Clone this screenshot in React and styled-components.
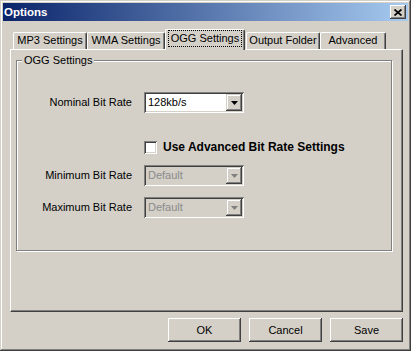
import React from "react";
import styled, { createGlobalStyle } from "styled-components";

const GlobalStyle = createGlobalStyle`
  html, body {
    margin: 0;
    padding: 0;
    background: #d4d0c8;
  }
  body {
    font-family: "Liberation Sans", Arial, sans-serif;
    font-size: 11px;
    color: #000;
  }
`;

const tabs = [
  { label: "MP3 Settings", width: 74 },
  { label: "WMA Settings", width: 78 },
  { label: "OGG Settings", width: 80, active: true },
  { label: "Output Folder", width: 74 },
  { label: "Advanced", width: 66 },
];

function DownArrow({ color }) {
  return (
    <svg width="7" height="4" viewBox="0 0 7 4">
      <polygon points="0,0 7,0 3.5,4" fill={color} />
    </svg>
  );
}

function ComboBox({ value, disabled }) {
  return (
    <Combo $disabled={disabled}>
      <ComboText $disabled={disabled}>{value}</ComboText>
      <DropButton>
        <DownArrow color={disabled ? "#808080" : "#000"} />
      </DropButton>
    </Combo>
  );
}

export default function App() {
  return (
    <>
      <GlobalStyle />
      <Window>
        <TitleBar>
          <Title>Options</Title>
          <CloseButton aria-label="Close">
            <svg width="8" height="7" viewBox="0 0 8 7">
              <path d="M0.5 0.5 L7.5 6.5 M7.5 0.5 L0.5 6.5" stroke="#000" strokeWidth="1.7" />
            </svg>
          </CloseButton>
        </TitleBar>
        <Body>
          <TabStrip>
            {tabs.map((t) => (
              <Tab key={t.label} $w={t.width} $active={t.active}>
                <TabLabel $focus={t.active}>{t.label}</TabLabel>
              </Tab>
            ))}
          </TabStrip>
          <Panel>
            <GroupBox>
              <Legend>OGG Settings</Legend>
              <FieldRow $top={25}>
                <Label>Nominal Bit Rate</Label>
                <ComboBox value="128kb/s" />
              </FieldRow>
              <FieldRow $top={28}>
                <Label />
                <CheckLine>
                  <CheckBox />
                  <CheckText>Use Advanced Bit Rate Settings</CheckText>
                </CheckLine>
              </FieldRow>
              <FieldRow $top={11}>
                <Label>Minimum Bit Rate</Label>
                <ComboBox value="Default" disabled />
              </FieldRow>
              <FieldRow $top={11}>
                <Label>Maximum Bit Rate</Label>
                <ComboBox value="Default" disabled />
              </FieldRow>
            </GroupBox>
          </Panel>
          <Footer>
            <Button>OK</Button>
            <Button>Cancel</Button>
            <Button>Save</Button>
          </Footer>
        </Body>
      </Window>
    </>
  );
}

// ---------- styles ----------
const Window = styled.div`
  box-sizing: border-box;
  width: 411px;
  height: 351px;
  padding: 3px;
  display: flex;
  flex-direction: column;
  background: #d4d0c8;
  box-shadow: inset -1px -1px #404040, inset 1px 1px #d4d0c8,
    inset -2px -2px #808080, inset 2px 2px #fff;
`;

const TitleBar = styled.div`
  height: 18px;
  display: flex;
  align-items: center;
  justify-content: space-between;
  padding: 0 2px 0 1px;
  background: linear-gradient(to right, #0a246a, #a6caf0);
`;

const Title = styled.span`
  color: #fff;
  font-weight: bold;
  font-size: 11.5px;
  line-height: 13px;
`;

const CloseButton = styled.button`
  width: 16px;
  height: 14px;
  padding: 0;
  border: 0;
  display: flex;
  align-items: center;
  justify-content: center;
  background: #d4d0c8;
  box-shadow: inset -1px -1px #404040, inset 1px 1px #fff,
    inset -2px -2px #808080, inset 2px 2px #d4d0c8;
`;

const Body = styled.div`
  flex: 1;
  display: flex;
  flex-direction: column;
  padding: 8px 5px 0 7px;
`;

const TabStrip = styled.div`
  position: relative;
  z-index: 1;
  height: 20px;
  display: flex;
  align-items: flex-end;
  padding-left: 3px;
`;

const Tab = styled.div`
  box-sizing: border-box;
  width: ${(p) => p.$w}px;
  height: ${(p) => (p.$active ? 21 : 17)}px;
  margin-bottom: ${(p) => (p.$active ? -1 : 0)}px;
  margin-right: ${(p) => (p.$active ? 1 : 0)}px;
  display: flex;
  align-items: center;
  justify-content: center;
  padding-bottom: ${(p) => (p.$active ? 0 : 1)}px;
  background: #d4d0c8;
  border-top: 1px solid #fff;
  border-left: 1px solid #fff;
  border-right: 1px solid #404040;
  border-radius: 2px 2px 0 0;
  box-shadow: inset -1px 0 #808080;
  white-space: nowrap;
`;

const TabLabel = styled.span`
  box-sizing: border-box;
  line-height: 13px;
  ${(p) =>
    p.$focus &&
    `
    align-self: stretch;
    flex: 1;
    margin: 0 2px 3px 2px;
    border: 1px dotted #000;
    display: flex;
    align-items: center;
    justify-content: center;
  `}
`;

const Panel = styled.div`
  box-sizing: border-box;
  height: 263px;
  padding: 10px 0 0 5px;
  border-top: 1px solid #fff;
  border-left: 1px solid #fff;
  border-right: 1px solid #404040;
  border-bottom: 1px solid #404040;
  box-shadow: inset -1px -1px #808080;
`;

const GroupBox = styled.div`
  box-sizing: border-box;
  width: 376px;
  height: 191px;
  display: flex;
  flex-direction: column;
  border: 1px solid #808080;
  box-shadow: inset 1px 1px #fff, 1px 1px #fff;
`;

const Legend = styled.span`
  align-self: flex-start;
  margin: -7px 0 0 5px;
  padding: 0 2px;
  line-height: 13px;
  background: #d4d0c8;
`;

const FieldRow = styled.div`
  display: grid;
  grid-template-columns: 115px auto;
  column-gap: 12px;
  align-items: center;
  margin-top: ${(p) => p.$top}px;
`;

const Label = styled.span`
  justify-self: end;
  line-height: 13px;
`;

const Combo = styled.div`
  box-sizing: border-box;
  width: 100px;
  height: 21px;
  padding: 2px;
  display: flex;
  align-items: center;
  background: ${(p) => (p.$disabled ? "#d4d0c8" : "#fff")};
  box-shadow: inset 1px 1px #808080, inset -1px -1px #fff,
    inset 2px 2px #404040, inset -2px -2px #d4d0c8;
`;

const ComboText = styled.span`
  flex: 1;
  padding-left: 2px;
  line-height: 13px;
  color: ${(p) => (p.$disabled ? "#8a8a8a" : "#000")};
`;

const DropButton = styled.div`
  width: 16px;
  height: 17px;
  display: flex;
  align-items: center;
  justify-content: center;
  background: #d4d0c8;
  box-shadow: inset -1px -1px #404040, inset 1px 1px #d4d0c8,
    inset -2px -2px #808080, inset 2px 2px #fff;
`;

const CheckLine = styled.div`
  display: flex;
  align-items: center;
  height: 13px;
`;

const CheckBox = styled.span`
  width: 13px;
  height: 13px;
  flex-shrink: 0;
  background: #fff;
  box-shadow: inset 1px 1px #808080, inset -1px -1px #fff,
    inset 2px 2px #404040, inset -2px -2px #d4d0c8;
`;

const CheckText = styled.span`
  margin-left: 6px;
  font-weight: bold;
  font-size: 12px;
  white-space: nowrap;
  line-height: 13px;
`;

const Footer = styled.div`
  display: flex;
  justify-content: flex-end;
  gap: 8px;
  margin-top: 6px;
`;

const Button = styled.button`
  box-sizing: border-box;
  width: 73px;
  height: 24px;
  padding: 0;
  border: 0;
  background: #d4d0c8;
  font-family: "Liberation Sans", Arial, sans-serif;
  font-size: 11px;
  color: #000;
  box-shadow: inset -1px -1px #404040, inset 1px 1px #fff,
    inset -2px -2px #808080, inset 2px 2px #d4d0c8;
`;
